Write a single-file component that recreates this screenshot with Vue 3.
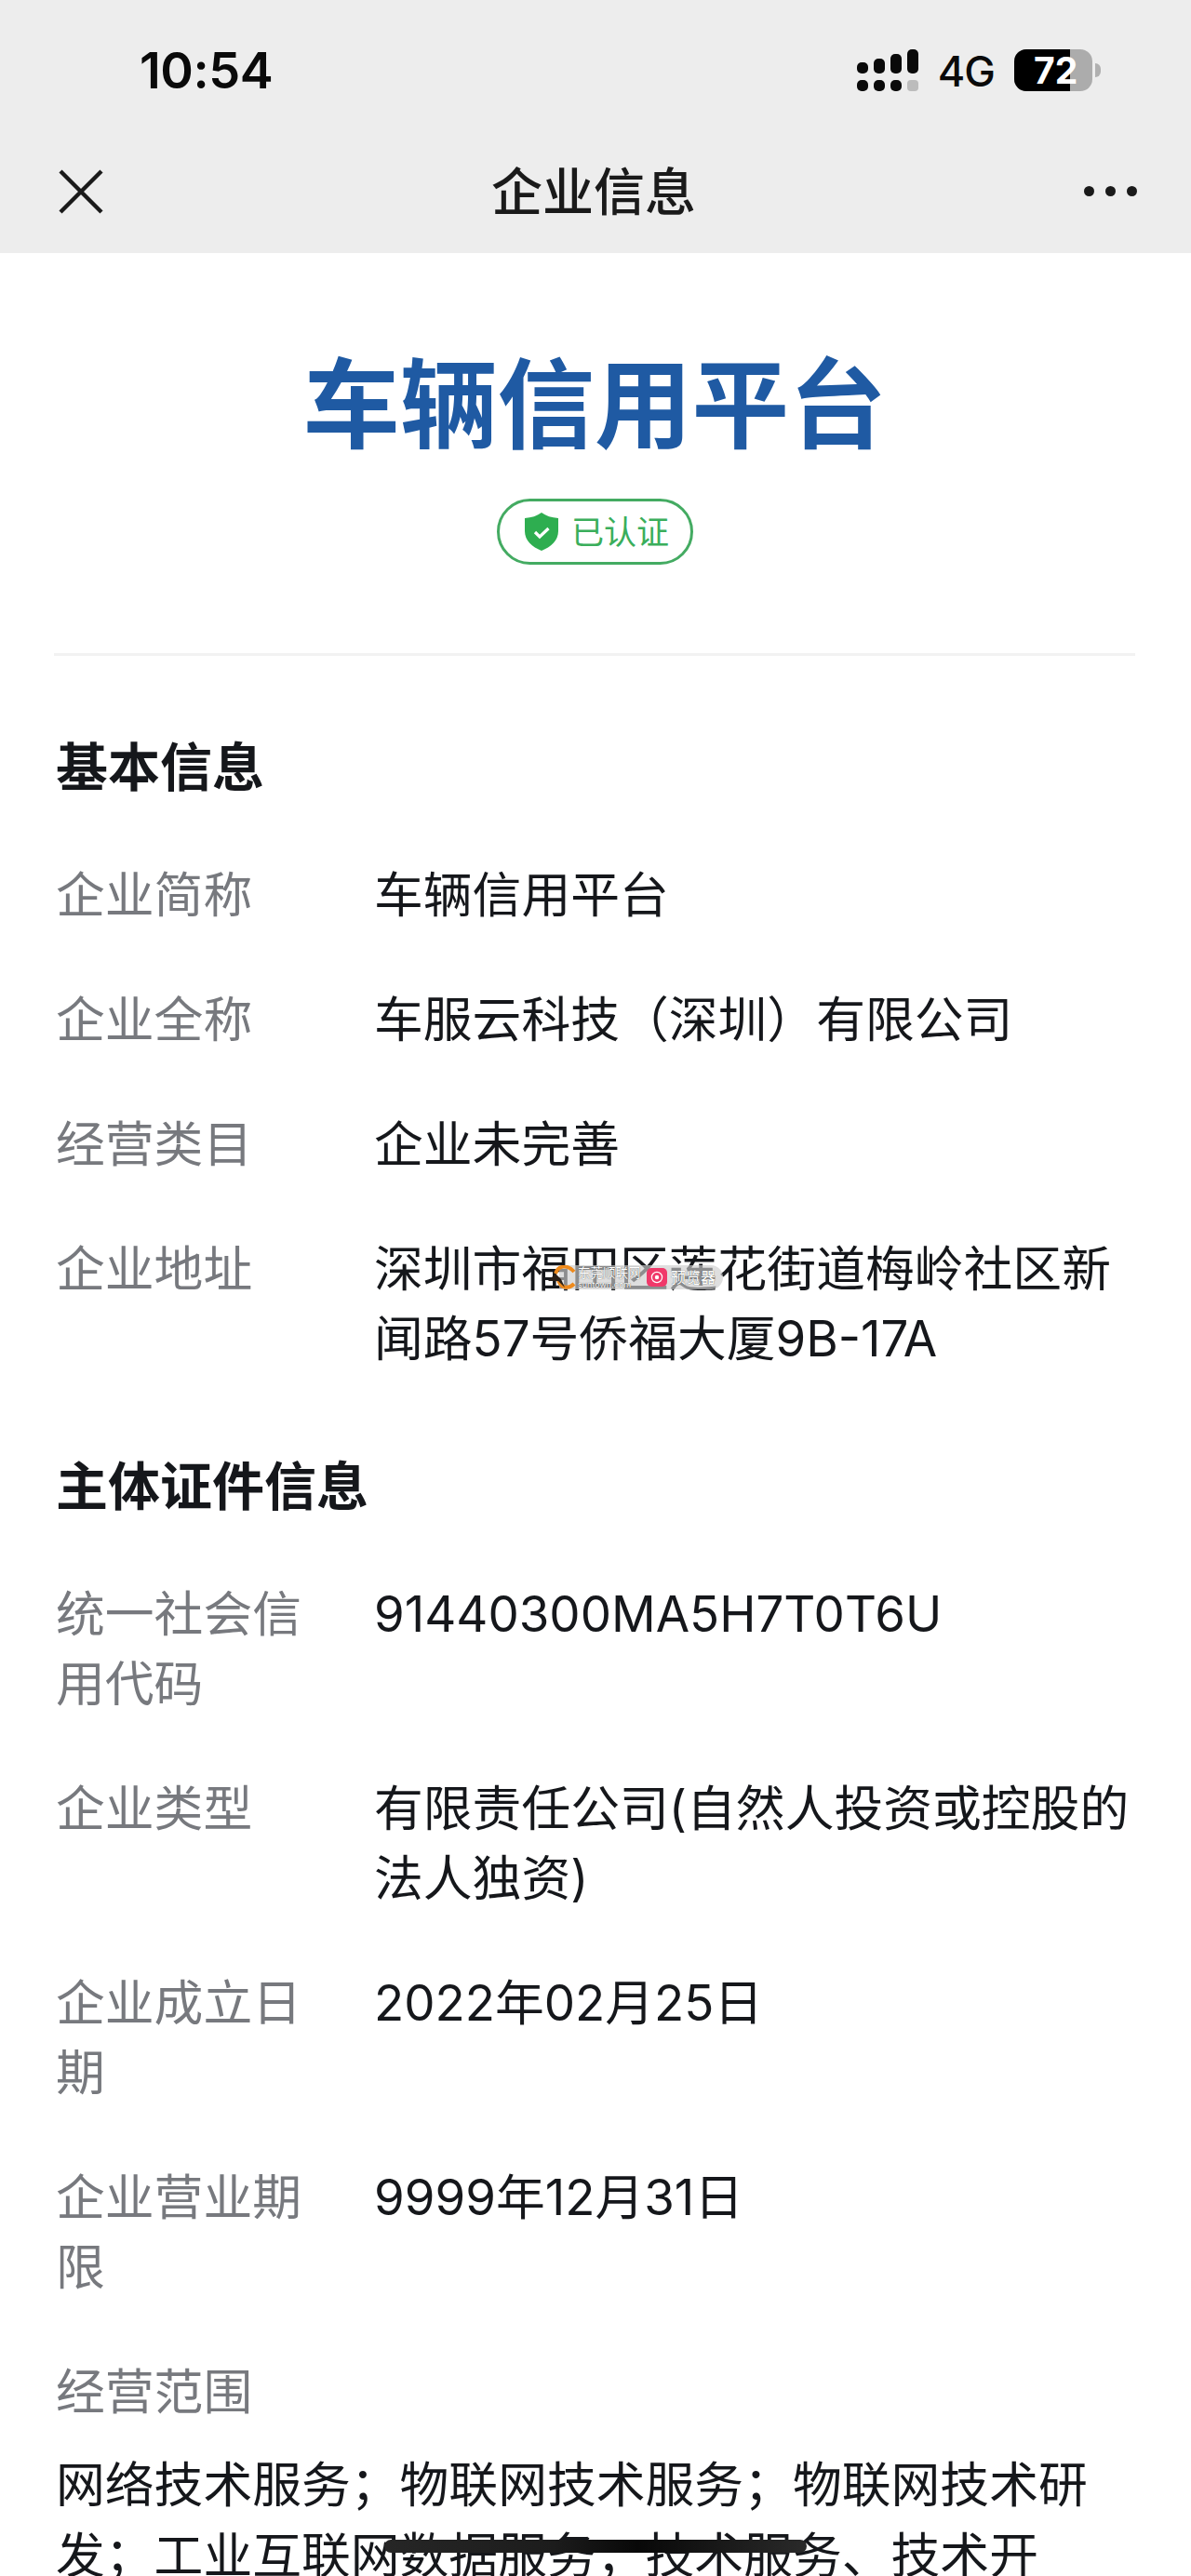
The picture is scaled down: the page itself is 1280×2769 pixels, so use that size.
<script setup>
const basic = [
  { label: '企业简称', value: '车辆信用平台' },
  { label: '企业全称', value: '车服云科技（深圳）有限公司' },
  { label: '经营类目', value: '企业未完善' },
  { label: '企业地址', value: '深圳市福田区莲花街道梅岭社区新闻路57号侨福大厦9B-17A' },
]
const cert = [
  { label: '统一社会信用代码', value: '91440300MA5H7T0T6U' },
  { label: '企业类型', value: '有限责任公司(自然人投资或控股的法人独资)' },
  { label: '企业成立日期', value: '2022年02月25日' },
  { label: '企业营业期限', value: '9999年12月31日' },
]
</script>

<template>
  <div class="page">
    <header class="top">
      <div class="status">
        <span class="time">10:54</span>
        <div class="status-right">
          <svg class="signal" width="66" height="46" viewBox="0 0 66 46" aria-hidden="true">
            <g fill="#0a0a0a">
              <rect x="0" y="14" width="12" height="12" rx="5" />
              <rect x="18" y="10" width="12" height="16" rx="5" />
              <rect x="36" y="5" width="12" height="21" rx="5" />
              <rect x="54" y="0" width="12" height="26" rx="5" />
              <rect x="0" y="33" width="12" height="12" rx="5" />
              <rect x="18" y="33" width="12" height="12" rx="5" />
              <rect x="36" y="33" width="12" height="12" rx="5" />
            </g>
            <rect x="54" y="33" width="12" height="12" rx="4" fill="#bcbcbc" />
          </svg>
          <span class="net">4G</span>
          <div class="battery">
            <div class="battery-body">
              <div class="battery-fill"></div>
              <span class="battery-num">72</span>
            </div>
            <div class="battery-nub"></div>
          </div>
        </div>
      </div>
      <nav class="nav">
        <svg class="close" width="48" height="48" viewBox="0 0 48 48" aria-hidden="true">
          <path d="M2 2 L46 46 M46 2 L2 46" stroke="#1a1a1a" stroke-width="4.4" fill="none" />
        </svg>
        <h1 class="nav-title">企业信息</h1>
        <div class="dots"><i></i><i></i><i></i></div>
      </nav>
    </header>

    <main class="content">
      <section class="hero">
        <h2 class="brand">车辆信用平台</h2>
        <div class="badge">
          <svg width="36" height="41" viewBox="0 0 36 41" aria-hidden="true">
            <path d="M18 0 C22.5 3.5 29 5.5 36 6 V20 C36 30 28 37 18 41 C8 37 0 30 0 20 V6 C7 5.5 13.5 3.5 18 0 Z" fill="#2eae50" />
            <path d="M11 21 L16 26 L25.5 17" stroke="#fff" stroke-width="3.2" fill="none" />
          </svg>
          <span>已认证</span>
        </div>
      </section>

      <h3 class="heading first">基本信息</h3>
      <dl class="rows">
        <div v-for="r in basic" :key="r.label" class="row">
          <dt>{{ r.label }}</dt>
          <dd>{{ r.value }}</dd>
        </div>
      </dl>

      <h3 class="heading second">主体证件信息</h3>
      <dl class="rows">
        <div v-for="r in cert" :key="r.label" class="row">
          <dt>{{ r.label }}</dt>
          <dd>{{ r.value }}</dd>
        </div>
      </dl>

      <div class="scope">
        <div class="scope-label">经营范围</div>
        <p class="scope-text">网络技术服务；物联网技术服务；物联网技术研发；工业互联网数据服务；技术服务、技术开发、技术咨询、技术交流、技术转让、技术推广。</p>
      </div>
    </main>

    <div class="chip">
      <svg class="chip-logo" width="30" height="26" viewBox="0 0 30 26" aria-hidden="true">
        <path d="M28 7 C21 -1 11 0 8 9 M28 20 C22 26 14 25 11 16" stroke="#ee8a1c" stroke-width="4" fill="none" />
        <path d="M0 17 L8 9 L14 15 L18 24 L11 17 Z" fill="#2a2018" />
      </svg>
      <span class="chip-brand">
        <span class="chip-name">东莞顺联网</span>
        <span class="chip-url">suntown.com</span>
      </span>
      <span class="chip-eye">
        <svg width="14" height="14" viewBox="0 0 14 14" aria-hidden="true">
          <circle cx="7" cy="7" r="5.6" stroke="#fff" stroke-width="1.2" fill="none" />
          <circle cx="7" cy="7" r="2.2" fill="#fff" />
        </svg>
      </span>
      <span class="chip-name chip-tail">预览器</span>
    </div>
    <div class="home-bar"></div>
  </div>
</template>

<style scoped>
.page {
  position: relative;
  width: 1280px;
  height: 2769px;
  overflow: hidden;
  background: #fff;
  font-family: Inter, "Noto Sans CJK SC", sans-serif;
  color: #15171b;
}
.top {
  height: 272px;
  background: #ededed;
}
.status {
  height: 146px;
  box-sizing: border-box;
  display: flex;
  justify-content: space-between;
  align-items: flex-start;
  padding: 40px 97px 0 150px;
}
.time {
  font-size: 54px;
  line-height: 72px;
  font-weight: 600;
  color: #0a0a0a;
  letter-spacing: -0.5px;
}
.status-right {
  display: flex;
  align-items: flex-start;
  margin-top: 13px;
}
.signal {
  margin-right: 21px;
}
.net {
  font-size: 45px;
  line-height: 48px;
  font-weight: 500;
  color: #0a0a0a;
  margin-right: 21px;
  letter-spacing: -1px;
}
.battery {
  display: flex;
  align-items: center;
  gap: 3px;
}
.battery-body {
  position: relative;
  width: 84px;
  height: 45px;
  border-radius: 13px;
  background: #acacac;
  overflow: hidden;
}
.battery-fill {
  width: 60px;
  height: 100%;
  background: #000;
}
.battery-num {
  position: absolute;
  left: 21px;
  top: 0;
  font-size: 39px;
  line-height: 45px;
  font-weight: 700;
  color: #fff;
}
.battery-nub {
  width: 6px;
  height: 15px;
  background: #b0b0b0;
  border-radius: 0 8px 8px 0;
}
.nav {
  height: 119px;
  display: grid;
  grid-template-columns: 1fr auto 1fr;
  align-items: center;
  padding: 0 58px 0 54px;
}
.close {
  display: block;
  margin-left: 9px;
}
.nav-title {
  margin: 0;
  font-size: 55px;
  line-height: 72px;
  font-weight: 500;
  color: #1a1a1a;
}
.dots {
  justify-self: end;
  display: flex;
  gap: 12px;
}
.dots i {
  display: block;
  width: 11px;
  height: 11px;
  border-radius: 50%;
  background: #1a1a1a;
}
.content {
  padding: 0 60px;
}
.hero {
  height: 433px;
  box-sizing: border-box;
  padding-top: 100px;
  display: flex;
  flex-direction: column;
  align-items: center;
  border-bottom: 3px solid #f2f2f2;
  margin-left: -2px;
}
.brand {
  margin: 0;
  font-size: 104.5px;
  line-height: 126px;
  font-weight: 700;
  color: #1f5aa3;
}
.badge {
  margin-top: 38px;
  width: 211px;
  height: 71px;
  padding-left: 5px;
  box-sizing: border-box;
  border: 3.5px solid #44ab62;
  border-radius: 36px;
  display: flex;
  align-items: center;
  justify-content: center;
  gap: 14px;
  font-size: 35px;
  line-height: 44px;
  color: #3aae5b;
}
.heading {
  margin: 0;
  font-size: 56px;
  line-height: 75px;
  font-weight: 700;
  color: #15171b;
}
.heading.first {
  margin-top: 83px;
}
.heading.second {
  margin-top: 84px;
}
.rows {
  margin: 62px 0 0;
  display: flex;
  flex-direction: column;
  gap: 59px;
}
.row {
  display: grid;
  grid-template-columns: 280px 1fr;
  column-gap: 62px;
  font-size: 52.8px;
  line-height: 75px;
}
.row dt {
  color: #77797e;
}
.row dd {
  margin: 0;
  color: #15171b;
}
.scope {
  margin-top: 59px;
  font-size: 52.8px;
}
.scope-label {
  line-height: 75px;
  color: #77797e;
}
.scope-text {
  margin: 24px 0 0;
  line-height: 76px;
}
.chip {
  position: absolute;
  left: 589px;
  top: 1360px;
  width: 188px;
  height: 26px;
  border-radius: 13px;
  background: linear-gradient(to right, transparent 12px, rgba(205, 205, 205, 0.65) 12px);
  display: flex;
  align-items: center;
  color: #fff;
}
.chip-logo {
  flex: none;
}
.chip-brand {
  display: flex;
  flex-direction: column;
  width: 74px;
  margin-left: 2px;
  flex: none;
}
.chip-name {
  font-size: 13.5px;
  line-height: 15px;
  white-space: nowrap;
  text-shadow: 0 0 1px #333;
}
.chip-url {
  font-size: 9px;
  line-height: 9px;
  white-space: nowrap;
  text-shadow: 0 0 1px #333;
}
.chip-eye {
  flex: none;
  width: 22px;
  height: 20px;
  border-radius: 5px;
  background: #f0396a;
  display: flex;
  align-items: center;
  justify-content: center;
}
.chip-tail {
  margin-left: 4px;
  font-size: 16px;
}
.home-bar {
  position: absolute;
  left: 413px;
  top: 2730px;
  width: 454px;
  height: 14px;
  border-radius: 7px;
  background: linear-gradient(to right, #262626, #1c1c1c 40%, #080808 60%, #2a2a2a);
}
</style>
